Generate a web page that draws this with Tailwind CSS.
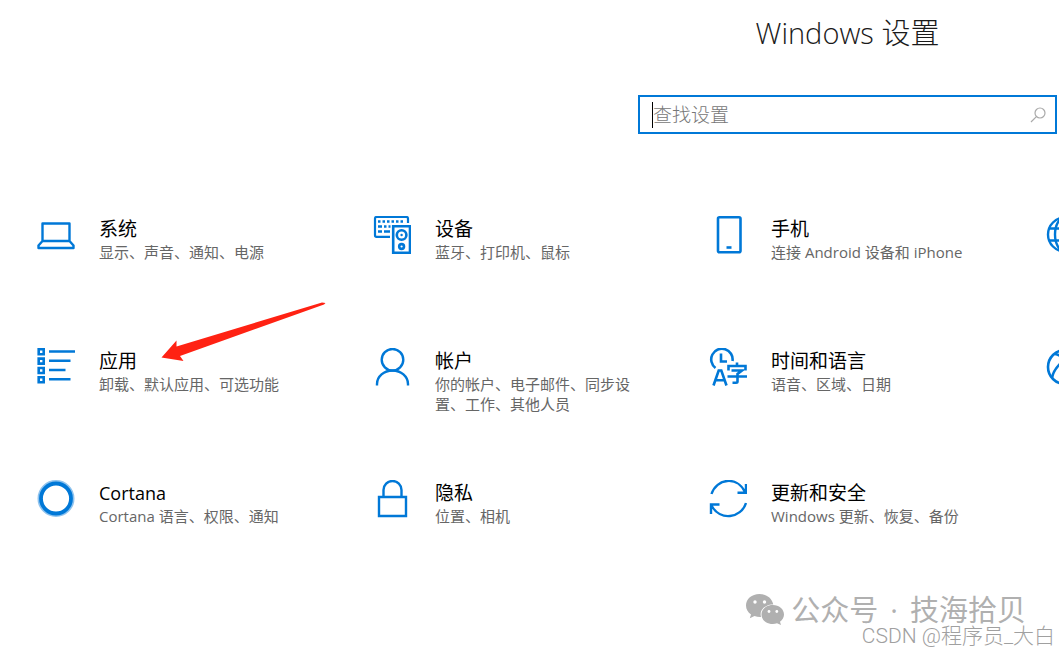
<!DOCTYPE html>
<html lang="zh-CN">
<head>
<meta charset="utf-8">
<meta name="viewport" content="width=device-width, initial-scale=1">
<title>Windows 设置</title>
<script src="https://cdn.jsdelivr.net/npm/@tailwindcss/browser@4"></script>
</head>
<body class="relative min-h-screen overflow-hidden bg-white font-['Open_Sans','Noto_Sans_CJK_SC',sans-serif] text-black">
<header class="flex flex-col items-end pr-0.5 pt-3">
  <div class="flex w-[419px] flex-col items-center">
    <h1 class="text-[29px] leading-[42px] font-light text-[#1a1a1a]">Windows 设置</h1>
    <label class="mt-[41px] flex h-[39px] w-full items-center border-2 border-[#0078d7] pr-[9px] pl-3">
      <span class="h-[26px] w-px bg-black"></span>
      <input type="text" aria-label="查找设置" placeholder="查找设置" class="min-w-0 flex-1 text-[19px] leading-6 font-light outline-none placeholder:text-[#777]">
      <svg class="size-4" viewBox="0 0 16 16" fill="none" stroke="#aaa" stroke-width="1.2"><circle cx="10" cy="6" r="5"/><path d="M6.4 9.6 1 15"/></svg>
    </label>
  </div>
</header>
<main class="mt-[82px] grid auto-rows-[132px] grid-cols-[repeat(4,336px)] overflow-hidden pl-[37px]">
  <a href="#system" class="flex gap-6">
    <svg class="size-[38px] shrink-0" viewBox="0 0 38 38" fill="none" stroke="#0078d7" stroke-width="2.4"><path d="M5.500 7.500H32.500V25H5.500ZM5.500 25 1.500 29.500V32H36.500V29.500L32.500 25" stroke-linejoin="round"/></svg>
    <span class="w-[200px]"><span class="block text-[19px] leading-[26px]">系统</span><span class="block text-[15px] leading-5 text-[#666]">显示、声音、通知、电源</span></span>
  </a>
  <a href="#devices" class="flex gap-6">
    <svg class="size-[38px] shrink-0" viewBox="0 0 38 38" fill="none" stroke="#0078d7"><path d="M17 20.800H3.500Q2 20.800 2 19.300V2.500Q2 1 3.500 1H33.500Q35 1 35 2.500V7" stroke-width="2.200"/><path d="M5 5.500H32" stroke-width="2.500" stroke-dasharray="2.500 2"/><path d="M5 10.500h4M11 10.500h2.500M5 15.500h4M11 15.500h6M15.500 10.500h2" stroke-width="2.500"/><path d="M20.200 10.200H37V36.700H20.200Z" stroke-width="2.600"/><circle cx="28.600" cy="19" r="4.800" stroke-width="2.600"/><circle cx="28.600" cy="19" r="1.200" fill="#0078d7" stroke="none"/><circle cx="28.600" cy="30.500" r="2.400" stroke-width="2.600"/></svg>
    <span class="w-[200px]"><span class="block text-[19px] leading-[26px]">设备</span><span class="block text-[15px] leading-5 text-[#666]">蓝牙、打印机、鼠标</span></span>
  </a>
  <a href="#phone" class="flex gap-6">
    <svg class="size-[38px] shrink-0" viewBox="0 0 38 38" fill="none" stroke="#0078d7" stroke-width="2.600"><rect x="9" y="1.300" width="22.500" height="35" rx="1.500"/><path d="M17.500 31.500h5"/></svg>
    <span class="w-[200px]"><span class="block text-[19px] leading-[26px]">手机</span><span class="block text-[15px] leading-5 whitespace-nowrap text-[#666]">连接 Android 设备和 iPhone</span></span>
  </a>
  <a href="#network" aria-label="网络和 Internet" class="flex gap-6">
    <svg class="size-[38px] shrink-0" viewBox="0 0 38 38" fill="none" stroke="#0078d7" stroke-width="2.400"><circle cx="20" cy="18.500" r="17"/><ellipse cx="20" cy="18.500" rx="10" ry="17"/><path d="M4 12.500H36M4 24.500H36"/></svg>
  </a>
  <a href="#apps" class="flex gap-6">
    <svg class="size-[38px] shrink-0" viewBox="0 0 38 38" fill="none" stroke="#0078d7" stroke-width="2.600"><path d="M1.700 1.200h5v5h-5zM1.700 10.600h5v5h-5zM1.700 20h5v5h-5zM1.700 29.300h5v5h-5zM12 3.500H38M12 12.700H33.500M12 22H28.500M12 31.300H33.500"/></svg>
    <span class="w-[200px]"><span class="block text-[19px] leading-[26px]">应用</span><span class="block text-[15px] leading-5 text-[#666]">卸载、默认应用、可选功能</span></span>
  </a>
  <a href="#accounts" class="flex gap-6">
    <svg class="size-[38px] shrink-0" viewBox="0 0 38 38" fill="none" stroke="#0078d7" stroke-width="2.400"><circle cx="19.500" cy="11.800" r="10.800"/><path d="M4 37.500V36C4 28.500 11 22.500 19.500 22.500S35 28.500 35 36v1.500"/></svg>
    <span class="w-[200px]"><span class="block text-[19px] leading-[26px]">帐户</span><span class="block text-[15px] leading-5 text-[#666]">你的帐户、电子邮件、同步设置、工作、其他人员</span></span>
  </a>
  <a href="#time" class="flex gap-6">
    <svg class="size-[38px] shrink-0" viewBox="0 0 38 38" fill="none" stroke="#0078d7" stroke-width="2.600"><path d="M6.500 20A10.700 10.700 0 1 1 23.500 13"/><path d="M12 5.500V13.500H18"/><path d="M4.500 37.500 9.700 22.500H12.300L17.500 37.500M6.500 32.300h9"/><path d="M28 14.500v4M19.500 22.500V18H36.500V22.500M22.500 22.500H33L28.500 26V33.500Q28.500 34.700 27 34.700H23.500M18.500 28.500H38"/></svg>
    <span class="w-[200px]"><span class="block text-[19px] leading-[26px]">时间和语言</span><span class="block text-[15px] leading-5 text-[#666]">语音、区域、日期</span></span>
  </a>
  <a href="#gaming" aria-label="游戏" class="flex gap-6">
    <svg class="size-[38px] shrink-0" viewBox="0 0 38 38" fill="none" stroke="#0078d7" stroke-width="2.600"><circle cx="20" cy="19" r="17"/><path d="M7 30C8 23 13 17 20 11 27 17 32 23 33 30M10 6Q15 7 20 11 25 7 30 6"/></svg>
  </a>
  <a href="#cortana" class="flex gap-6">
    <svg class="size-[38px] shrink-0" viewBox="0 0 38 38" fill="none"><circle cx="19" cy="18.500" r="17.300" stroke="#8fc3ee" stroke-width="2.400"/><circle cx="19" cy="18.500" r="15" stroke="#0078d7" stroke-width="3.800"/></svg>
    <span class="w-[200px]"><span class="block text-[18px] leading-[26px]">Cortana</span><span class="block text-[15px] leading-5 text-[#666]">Cortana 语言、权限、通知</span></span>
  </a>
  <a href="#privacy" class="flex gap-6">
    <svg class="size-[38px] shrink-0" viewBox="0 0 38 38" fill="none" stroke="#0078d7" stroke-width="2.400"><path d="M6 17H33V36H6ZM10.500 17V10a9 9 0 0 1 18 0V17"/></svg>
    <span class="w-[200px]"><span class="block text-[19px] leading-[26px]">隐私</span><span class="block text-[15px] leading-5 text-[#666]">位置、相机</span></span>
  </a>
  <a href="#update" class="flex gap-6">
    <svg class="size-[38px] shrink-0" viewBox="0 0 38 38" fill="none" stroke="#0078d7" stroke-width="2.400"><path d="M2.500 14C7.500-1.500 28-4.500 36 12M37 4V12.700H28.500M37 23C32 38.500 11 41.500 2.500 25.500M2 34V24.500H10.500"/></svg>
    <span class="w-[200px]"><span class="block text-[19px] leading-[26px]">更新和安全</span><span class="block text-[15px] leading-5 whitespace-nowrap text-[#666]">Windows 更新、恢复、备份</span></span>
  </a>
</main>
<svg class="pointer-events-none absolute top-[300px] left-[160px] h-[64px] w-[168px]" viewBox="0 0 168 64" fill="#ff2213" aria-hidden="true"><path d="M1.500 57.500 16.500 40.500 16.500 46.500 162 2.500 165.500 3 164 4.500 20 56 23.500 61Z"/></svg>
<div class="absolute right-[33px] bottom-[21px] flex items-center gap-1.5 text-[#b0b0b0]">
  <svg class="h-8 w-10" viewBox="0 0 40 32" fill="currentColor" aria-hidden="true"><path d="M14.500 0C6.700 0 1 5 1 11.500c0 3.700 1.900 6.800 5 9L4.800 24.300 9.500 22c1.700.600 3.700 1 5.500 1h1C14 16 20 10.500 28.300 10.500 27 4 21.500 0 14.500 0Z"/><path d="M39 20.500C39 15 34 11 27.800 11S16.500 15 16.500 20.500 21.500 30 27.800 30c1.500 0 3-.200 4.200-.700L36 31l-1-3.300c2.500-1.800 4-4.300 4-7.200Z"/><g fill="#fff"><circle cx="10" cy="8" r="1.700"/><circle cx="19.500" cy="8" r="1.700"/><circle cx="24" cy="17.500" r="1.400"/><circle cx="31.800" cy="17.500" r="1.400"/></g></svg>
  <span class="flex gap-3 text-[29px] leading-[42px]"><span>公众号</span><span>·</span><span>技海拾贝</span></span>
</div>
<div class="absolute right-1 bottom-0.5 font-['Roboto','Noto_Sans_CJK_SC',sans-serif] text-[21px] leading-7 font-light text-[#a0a0a0]">CSDN @程序员_大白</div>
</body>
</html>
